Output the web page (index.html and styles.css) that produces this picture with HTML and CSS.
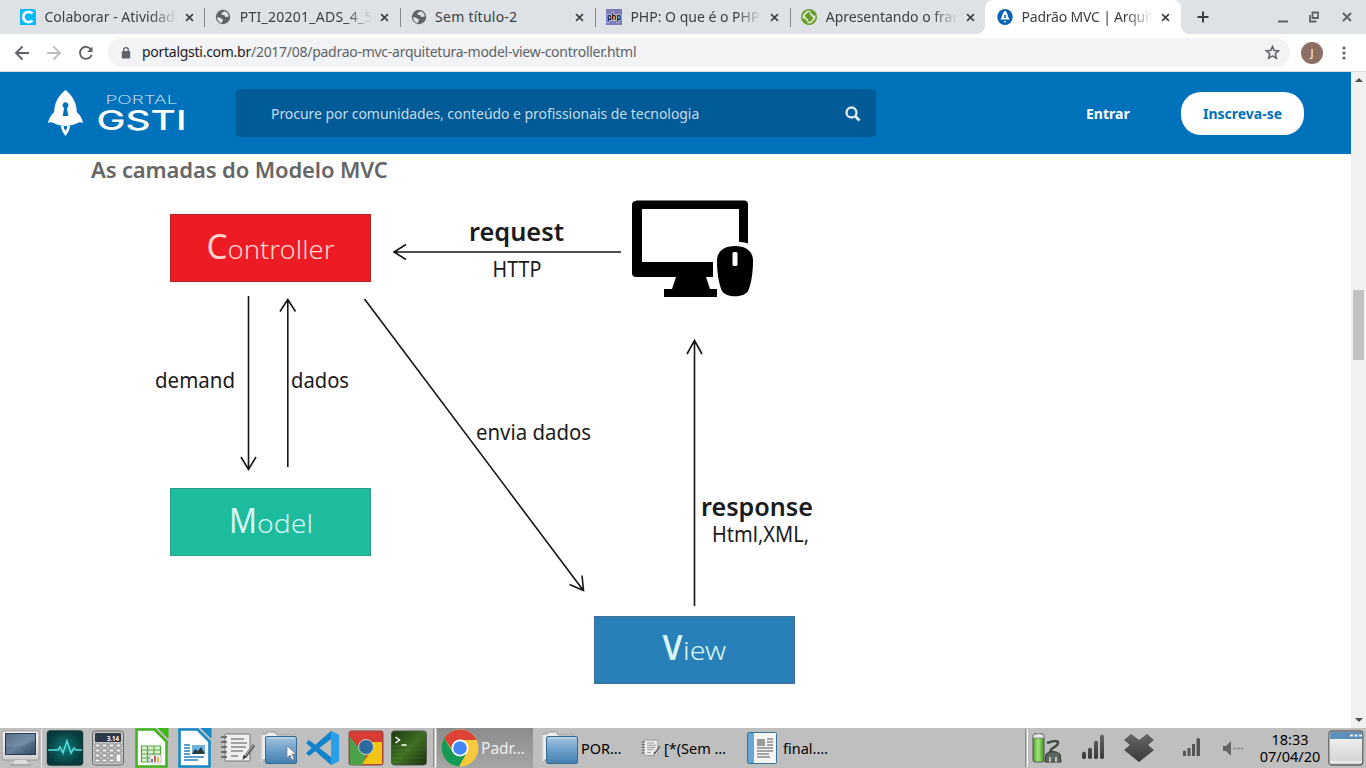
FILE: index.html
```html
<!DOCTYPE html>
<html lang="pt-BR">
<head>
<meta charset="utf-8">
<title>Padrão MVC | Arquitetura Model-View-Controller</title>
<link rel="stylesheet" href="styles.css">
</head>
<body>
<svg class="defs" width="0" height="0">
  <defs>
    <symbol id="globe" viewBox="0 0 16 16"><circle cx="8" cy="8" r="7.2" fill="#5f6368"/><path d="M2.2 8.2c1.500.1 2.700.3 3.600 1.100 1.100.9 2.200.5 2.200 1.800 0 .9-.9 1-.8 2.700C4 13.500 2 11 2.200 8.200zM9.300 2.300C8.500 3.200 7 3.400 6.500 4.400c-.5 1.100 1 1.600 2.200 1.500 1.200 0 .8 1.700 1.900 2 1.200.4 2-.5 3.200-.3-.1-2.600-2-4.800-4.500-5.300z" fill="#dee1e6"/></symbol>
    <symbol id="close" viewBox="0 0 10 10"><path d="M1.200 1.200l7.600 7.600M8.800 1.200L1.200 8.800" stroke="#3c4043" stroke-width="1.800"/></symbol>
    <linearGradient id="folderFill" x1="0" y1="0" x2="0" y2="1"><stop offset="0" stop-color="#a4c4de"/><stop offset=".5" stop-color="#6c9fca"/><stop offset="1" stop-color="#447eb0"/></linearGradient>
    <linearGradient id="grey" x1="0" y1="0" x2="0" y2="1"><stop offset="0" stop-color="#f8f8f8"/><stop offset="1" stop-color="#cfcfcf"/></linearGradient>
    <linearGradient id="dark" x1="0" y1="0" x2="0" y2="1"><stop offset="0" stop-color="#666"/><stop offset="1" stop-color="#3a3a3a"/></linearGradient>
    <linearGradient id="screen" x1="0" y1="0" x2="1" y2="1"><stop offset="0" stop-color="#3d5067"/><stop offset=".5" stop-color="#65809c"/><stop offset="1" stop-color="#344960"/></linearGradient>
    <radialGradient id="teal"><stop offset="0" stop-color="#13807f"/><stop offset="1" stop-color="#063b3c"/></radialGradient>
    <linearGradient id="term" x1="0" y1="0" x2="1" y2="1"><stop offset="0" stop-color="#1d3a0d"/><stop offset=".5" stop-color="#3d6f22"/><stop offset="1" stop-color="#162c09"/></linearGradient>
    <linearGradient id="battery"><stop offset="0" stop-color="#4d9b28"/><stop offset=".45" stop-color="#a5e77c"/><stop offset="1" stop-color="#439120"/></linearGradient>
    <symbol id="folder" viewBox="0 0 38 34"><path d="M2 3h4l2-2h7l2 3h15v25H2z" fill="#eee" stroke="#999"/><path d="M2 30V4" stroke="#fff"/><rect x="5.500" y="5.500" width="31" height="27" rx="1.500" fill="url(#folderFill)" stroke="#39698f"/><path d="M7 7h28" stroke="#c5dbed"/></symbol>
    <symbol id="notes" viewBox="0 0 36 32"><rect x="5" y="2" width="25" height="27" rx="1" fill="#eee" stroke="#777"/><g stroke="#555" stroke-width="1.500"><path d="M1 5h6M1 10h6M1 15h6M1 20h6M1 25h6"/></g><g stroke="#888" stroke-width="1.500"><path d="M11 7h13M11 11h16M11 15h15M11 19h12M11 24h7"/></g><path d="M34 13L25 25" stroke="#555" stroke-width="3"/><path d="M33.500 13L25 24" stroke="#aaa" stroke-width="1.200"/><path d="M23.500 23l3 2-4 3z" fill="#333"/></symbol>
  </defs>
</svg>
<div class="window">
  <header class="tabstrip">
    <div class="tab"><svg class="fav" viewBox="0 0 16 16"><path d="M0 0h14l2 2v14H0z" fill="#00b9ff"/><path d="M12.500 4.500C9 1.500 3.300 3 3.300 8s5.700 6.500 9.200 3.500" fill="none" stroke="#fff" stroke-width="2.700"/></svg><span class="title fade">Colaborar - Atividade</span><svg class="x"><use href="#close"/></svg></div>
    <div class="tab"><svg class="fav"><use href="#globe"/></svg><span class="title fade wide">PTI_20201_ADS_4_5</span><svg class="x"><use href="#close"/></svg></div>
    <div class="tab"><svg class="fav"><use href="#globe"/></svg><span class="title wide">Sem título-2</span><svg class="x"><use href="#close"/></svg></div>
    <div class="tab"><svg class="fav" viewBox="0 0 16 16"><rect width="16" height="16" fill="#7d7dbb"/><text x="1" y="11" class="php" textLength="14" lengthAdjust="spacingAndGlyphs">php</text></svg><span class="title fade">PHP: O que é o PHP?</span><svg class="x"><use href="#close"/></svg></div>
    <div class="tab last"><svg class="fav" viewBox="0 0 16 16"><circle cx="8" cy="8" r="8" fill="#679c2d"/><path d="M9.500 2.500H6.500L2.500 6.500v3M2.500 7l4.500 5M6.500 13.500h3l4-4v-3M13.500 9L9 4" fill="none" stroke="#e8f2dc" stroke-width="1.700"/></svg><span class="title fade">Apresentando o framework</span><svg class="x"><use href="#close"/></svg></div>
    <div class="tab active"><svg class="fav" viewBox="0 0 16 16"><ellipse cx="8" cy="8" rx="7.700" ry="8" fill="#0862b4"/><path d="M8 1.500C5.500 4 5 6.500 4.800 8L3.300 10.500h9.400L11.200 8C11 6.500 10.500 4 8 1.500zM6.800 12h2.400L8 14z" fill="#fff"/><path d="M7.200 6h1.600v3H7.200z" fill="#0862b4"/></svg><span class="title fade">Padrão MVC | Arquitetura</span><svg class="x"><use href="#close"/></svg></div>
    <svg class="newtab" viewBox="0 0 12 12"><path d="M6 .5v11M.5 6h11" stroke="#3c4043" stroke-width="2"/></svg>
    <svg class="winctl" viewBox="0 0 76 14"><path d="M1 11.500h10" stroke="#5f6368" stroke-width="2"/><path d="M35.500 2.500H41V8h-5.500zM33 5v6.500h6.500" fill="none" stroke="#5f6368" stroke-width="1.800"/><path d="M66 3l8 8M74 3l-8 8" stroke="#5f6368" stroke-width="2"/></svg>
  </header>
  <div class="toolbar">
    <svg class="nav" viewBox="0 0 108 36"><g fill="none" stroke-width="1.900"><path d="M29 18H16.500M22.500 11.500L16 18l6.500 6.500" stroke="#5f6368"/><path d="M47 18h12.500M53.500 11.500L60 18l-6.500 6.500" stroke="#bdbfc2"/><path d="M91 14.500a6 6 0 1 0 .7 5.200" stroke="#5f6368"/></g><path d="M92.500 11.500V17H87z" fill="#5f6368"/></svg>
    <div class="omnibox">
      <svg class="lock" viewBox="0 0 10 12"><rect x=".8" y="4" width="8.400" height="7.500" rx="1" fill="#5f6368"/><path d="M2.700 5V3a2.300 2.300 0 0 1 4.600 0v2" fill="none" stroke="#5f6368" stroke-width="1.300"/></svg>
      <span class="url"><b>portalgsti.com.br</b>/2017/08/padrao-mvc-arquitetura-model-view-controller.html</span>
      <svg class="star" viewBox="0 0 14 14"><path d="M7 1.300l1.600 3.900 4.200.3-3.200 2.700 1 4.200L7 10.200l-3.600 2.200 1-4.200L1.200 5.500l4.200-.3z" fill="none" stroke="#5f6368" stroke-width="1.400"/></svg>
    </div>
    <span class="avatar">J</span>
    <svg class="dots" viewBox="0 0 4 14"><g fill="#5f6368"><circle cx="2" cy="2" r="1.600"/><circle cx="2" cy="7" r="1.600"/><circle cx="2" cy="12" r="1.600"/></g></svg>
  </div>
  <div class="view">
    <main class="page">
      <div class="site">
        <svg class="logo" viewBox="0 0 140 48"><g fill="#fff"><path d="M17.500 1C10 7 6 15 6.300 23 3 26 1 29 0 34c2-1 4-1 6 .3 8 3.500 15 3.500 23 0 2-1.300 4-1.300 6-.3-1-5-3-8-6.300-11C29 15 25 7 17.500 1z"/><path d="M13 36.500c3 1 6 1 9 0 0 4-2 7-4.500 10.500C15 43.500 13 40.500 13 36.500z"/></g><path d="M14.700 27l1.400-8a3 3 0 1 1 2.800 0l1.400 8zM15.800 37h3.400c.2 2-.7 3.500-1.700 4.500-1-1-1.900-2.500-1.700-4.500z" fill="#0072bc"/><text x="57.500" y="15" class="portal" textLength="72" lengthAdjust="spacingAndGlyphs">PORTAL</text><text x="48.500" y="41" class="gsti" textLength="90" lengthAdjust="spacingAndGlyphs">GSTI</text></svg>
        <div class="search"><span class="ph">Procure por comunidades, conteúdo e profissionais de tecnologia</span><svg class="mag" viewBox="0 0 16 16"><circle cx="6.500" cy="6.500" r="5" fill="none" stroke="#e4eef5" stroke-width="2.300"/><path d="M10.300 10.300l4.200 4.200" stroke="#e4eef5" stroke-width="2.700"/></svg></div>
        <span class="login">Entrar</span>
        <span class="signup">Inscreva-se</span>
      </div>
      <h2 class="heading">As camadas do Modelo MVC</h2>
      <svg class="diagram" viewBox="90 186 800 514">
        <g class="boxes"><rect x="170.500" y="214.500" width="200" height="67" fill="#ed1c24" stroke="#b52428"/><rect x="170.500" y="488.500" width="200" height="67" fill="#1dbc9c" stroke="#2b9f88"/><rect x="594.500" y="616.500" width="200" height="67" fill="#2980b9" stroke="#406f91"/></g>
        <g class="arrows"><path d="M621 252H394M406 244.500L394 252l12 7.500M248.500 296V468M241 457l7.500 12.500L256 457M287.800 467V301M280 311.500l7.800-12 7.700 12M364.500 299L583 590M569.500 584.500l14 6-1.500-15M694.500 606V341M687 354l7.500-13.500L702 354"/></g>
        <g class="device"><path d="M636 200.500h108q4 0 4 4v39q-4-2-9-1.500V209h-97v53h71v15h-7l4 12h7v8h-53v-8h8l4-12h-40q-4 0-4-4v-68q0-4 4-4z"/><path d="M735 246c12 0 18 6 18 15 0 15-3 26-5 30-4 7-22 7-26 0-2-4-5-15-5-30 0-9 6-15 18-15z"/><rect x="732.500" y="252" width="5" height="14" rx="1.500" fill="#fff"/></g>
        <g class="boxtext"><text x="206.500" y="259" textLength="21" lengthAdjust="spacingAndGlyphs" class="big soft">C</text><text x="227.500" y="259" textLength="107" lengthAdjust="spacingAndGlyphs" class="rest soft">ontroller</text><text x="229" y="532.500" textLength="28" lengthAdjust="spacingAndGlyphs" class="big">M</text><text x="257" y="532.500" textLength="56" lengthAdjust="spacingAndGlyphs" class="rest">odel</text><text x="662.500" y="660" textLength="20" lengthAdjust="spacingAndGlyphs" class="big semi">V</text><text x="683" y="660" textLength="43" lengthAdjust="spacingAndGlyphs" class="rest">iew</text></g>
        <g class="labels"><text x="155" y="387.500" textLength="80" lengthAdjust="spacingAndGlyphs">demand</text><text x="291" y="387.500" textLength="58" lengthAdjust="spacingAndGlyphs">dados</text><text x="476" y="439.500" textLength="115" lengthAdjust="spacingAndGlyphs">envia dados</text><text x="492.500" y="276.500" textLength="49" lengthAdjust="spacingAndGlyphs">HTTP</text><text x="712" y="542" textLength="97" lengthAdjust="spacingAndGlyphs">Html,XML,</text><text x="469" y="240.500" textLength="95" lengthAdjust="spacingAndGlyphs" class="strong">request</text><text x="701" y="515.500" textLength="112" lengthAdjust="spacingAndGlyphs" class="strong">response</text></g>
      </svg>
    </main>
    <aside class="scrollbar"><i class="up"></i><i class="thumb"></i><i class="down"></i></aside>
  </div>
  <footer class="taskbar">
    <div class="launch">
      <svg class="ico desk" viewBox="0 0 42 40"><rect x="2" y="3" width="37" height="29" rx="2" fill="url(#grey)" stroke="#999"/><rect x="5.500" y="5.500" width="30" height="21" fill="url(#screen)" stroke="#273a50"/><path d="M6 19Q24 20 35 12V6H6z" fill="#91a6bb" opacity=".35"/><path d="M15 32h11l2 4H13z" fill="#ddd"/><path d="M10 36h21v2H10z" fill="#aaa"/><path d="M41.500 1v39" stroke="#eee"/></svg>
      <svg class="ico" viewBox="0 0 40 40"><rect x="2.500" y="3" width="35" height="34" rx="3" fill="url(#teal)" stroke="#17393a" stroke-width="1.500"/><path d="M4 9h32M4 13h32M4 17h32M4 25h32M4 29h32M4 33h32" stroke="#0b4c4c" opacity=".5"/><path d="M3 22h10l2-3 3 6 4-12 4 12 3-5 2 2h6" fill="none" stroke="#54dedb" stroke-width="1.600"/></svg>
      <svg class="ico" viewBox="0 0 40 40"><rect x="4.500" y="3" width="31" height="34" rx="3" fill="#c4c4c4" stroke="#666"/><rect x="7" y="5" width="26" height="9" rx="1" fill="#2d3947"/><text x="19" y="12.500" class="calc" textLength="12" lengthAdjust="spacingAndGlyphs">3.14</text><g fill="#f6f6f6" stroke="#777" stroke-width=".8"><path d="M7 16h5v3H7zM14 16h5v3h-5zM21 16h5v3h-5zM28 16h5v3h-5zM7 21h5v3H7zM14 21h5v3h-5zM21 21h5v3h-5zM28 21h5v3h-5zM7 26h5v3H7zM14 26h5v3h-5zM21 26h5v3h-5zM7 31h5v3H7zM14 31h5v3h-5zM21 31h5v3h-5zM28 26h5v8h-5z"/></g></svg>
      <svg class="ico" viewBox="0 0 40 40"><path d="M5.500 1.500h18l12 12v25h-30z" fill="#fff" stroke="#43b51f" stroke-width="2.600"/><path d="M27 0h10v10zM23 0l14 14" fill="#43b51f" stroke="#43b51f"/><path d="M10.500 18h19v16h-19zM10.500 22h19M10.500 26h19M10.500 30h19M16.500 18v16M23 18v16" fill="#dff0d8" stroke="#54a93b" stroke-width="1.200"/><rect x="19" y="27" width="11" height="8" fill="#fff" stroke="#aaa" stroke-width=".7"/><path d="M20 31h2v3h-2z" fill="#4285c7"/><path d="M23 28h2v6h-2z" fill="#db5840"/><path d="M26 29h2v5h-2z" fill="#edb332"/></svg>
      <svg class="ico" viewBox="0 0 40 40"><path d="M5.500 1.500h18l12 12v25h-30z" fill="#fff" stroke="#178ac8" stroke-width="2.600"/><path d="M27 0h10v10zM23 0l14 14" fill="#178ac8" stroke="#178ac8"/><path d="M10 17h6M10 20h6M10 23h6M10 26h6M10 29h20M10 32h14" stroke="#277fb7" stroke-width="1.500"/><rect x="18" y="17" width="13" height="9" fill="#6db4df"/><path d="M18 26l3-5 3 2 3-4 4 7z" fill="#283d40"/></svg>
      <svg class="ico" viewBox="-3 -4 40 40"><use href="#notes" width="36" height="32"/></svg>
      <svg class="ico" viewBox="0 -3 40 40"><use href="#folder" width="38" height="34"/><path d="M27 15v12l3-3 2 5 2-1-2-5h4z" fill="#fff" stroke="#777" stroke-width=".7"/></svg>
      <svg class="ico" viewBox="0 0 40 40"><path d="M28 3l8 4v26l-8 4L3 15l3-3 22 17V11L6 28l-3-3z" fill="#1182cc"/><path d="M28 3l8 4v26l-8 4z" fill="#29a0e8"/></svg>
      <svg class="ico" viewBox="0 0 40 40"><rect x="3" y="3" width="34" height="34" rx="2" fill="#d83b31" stroke="#8e4b42"/><path d="M4 9l11 14 6 3-5 11H4z" fill="#4ba248"/><path d="M20 14h16v22H16l9-13z" fill="#f1c614"/><circle cx="20" cy="19" r="7.500" fill="#2e699f" stroke="#ccd4cc" stroke-width="1"/></svg>
      <svg class="ico" viewBox="0 0 40 40"><rect x="2.500" y="3" width="35" height="34" rx="3" fill="url(#term)" stroke="#555"/><path d="M3 18h34M3 22h34M3 26h34M3 30h34M3 34h34" stroke="#6f9c4c" opacity=".25"/><path d="M6.500 9l4 3-4 3M12.500 17h5" fill="none" stroke="#fff" stroke-width="1.500"/></svg>
    </div>
    <i class="divider"></i>
    <div class="task current"><svg class="chrome" viewBox="0 0 38 38"><circle cx="19" cy="19" r="18.500" fill="#fbc93c"/><path d="M3.300 9.300A18.500 18.500 0 0 1 35.500 11H20l-8.500 10z" fill="#de4237"/><path d="M3.300 9.300l8.600 14 13 2L18 37.500A18.500 18.500 0 0 1 3.300 9.300z" fill="#149a55"/><circle cx="19" cy="19" r="8.500" fill="#fff"/><circle cx="19" cy="19" r="6.800" fill="#4285f4"/></svg><span>Padr…</span></div>
    <div class="task t-folder"><svg class="fold"><use href="#folder"/></svg><span>POR…</span></div>
    <div class="task t-notes"><svg class="note"><use href="#notes"/></svg><span>[*(Sem …</span></div>
    <div class="task t-doc"><svg class="doc" viewBox="0 0 30 33"><rect x=".5" y=".5" width="29" height="31" rx="1" fill="#f5f5f5" stroke="#347399"/><path d="M1 1h6v30H1z" fill="#69a4d3"/><rect x="10" y="7" width="8" height="7" fill="#999"/><path d="M20 7h6M20 10h6M20 13h6M10 16h16M10 19h16M10 22h12M10 25h13" stroke="#888" stroke-width="1.300"/></svg><span>final.…</span></div>
    <div class="tray">
      <i class="divider"></i>
      <svg class="trayicons" viewBox="1028 728 220 40"><rect x="1033" y="734" width="11" height="28" rx="2" fill="url(#battery)" stroke="#555"/><path d="M1033 735q5.500-3 11 0v3h-11z" fill="#e8e8e8" stroke="#777" stroke-width=".7"/><path d="M1047 743q11-4 11 0 0 2-5 5-3 2-3 5" fill="none" stroke="#444d44" stroke-width="2.600"/><path d="M1046 754q7-5 14 0l1 8h-16z" fill="#5c665c" stroke="#303530"/><path d="M1050 757v5M1056 757v5" stroke="#ddd" stroke-width="1.500"/>
      <path fill="url(#dark)" d="M1082 753q2-3 4 0v5q-2 2-4 0zM1088 749q2-3 4 0v9q-2 2-4 0zM1094 742q2-3 4 0v16q-2 2-4 0zM1100 736q2-3 4 0v22q-2 2-4 0z"/><path fill="#555" d="M1183 751q1.500-1 3 0v5h-3zM1187.500 748h3v8h-3zM1192 744h3v12h-3zM1196.500 739q1.500-2 3.500 0v17h-3.500z"/>
      <path d="M1131 734l8 6 8-6 7 6-6 5 6 5-15 12-15-12 6-5-6-5z" fill="url(#dark)"/><path d="M1223 746h3l5-5v15l-5-5h-3z" fill="#666"/><path d="M1233 748.500h3M1237 748.500h3M1241 748.500h2" stroke="#858585" stroke-width="1.500"/></svg>
      <div class="clock"><span>18:33</span><span>07/04/20</span></div>
      <svg class="showdesk" viewBox="0 0 36 38"><rect x=".8" y="2" width="34" height="34" rx="3" fill="url(#grey)" stroke="#666" stroke-width="1.300"/><path d="M2 4q0-1 2-1h28q2 0 2 1v6H2z" fill="#5c91bd"/><path d="M22 6.500h3M26.500 6.500h3M31 6.500h3" stroke="#eee" stroke-width="1.800"/><path d="M2 33h32" stroke="#fff"/></svg>
    </div>
  </footer>
</div>
</body>
</html>
```

FILE: styles.css
```css
* { box-sizing: border-box; }
body { margin: 0; font-family: "Noto Sans", "Open Sans", sans-serif; overflow: hidden; }
svg { display: block; flex: none; }
.defs { position: absolute; }
.window { width: 1366px; height: 768px; display: flex; flex-direction: column; background: #fff; }
.tabstrip { height: 34px; flex: none; display: flex; align-items: center; background: #dee1e6; padding-left: 10px; }
.tab { width: 195.300px; height: 34px; flex: none; display: flex; align-items: center; padding-left: 10px; position: relative; }
.tab::after { content: ""; position: absolute; right: 0; top: 8px; width: 1px; height: 19px; background: #85888c; }
.tab.last { width: 193.800px; }
.tab.last::after { display: none; }
.tab.active { width: 196px; background: #fff; border-radius: 8px 8px 0 0; padding-left: 12px; margin-right: 16px; }
.tab.active::before, .tab.active::after { content: ""; position: absolute; top: auto; bottom: 0; width: 8px; height: 8px; }
.tab.active::before { left: -8px; background: radial-gradient(circle at 0 0, transparent 7.500px, #fff 8px); }
.tab.active::after { right: -8px; background: radial-gradient(circle at 100% 0, transparent 7.500px, #fff 8px); }
.fav { width: 16px; height: 16px; margin-right: 8.500px; }
.title { width: 132px; font-size: 14px; line-height: 20px; color: #3c4043; white-space: nowrap; overflow: hidden; }
.wide { letter-spacing: 0.250px; }
.active .title { letter-spacing: -0.200px; }
.fade { -webkit-mask-image: linear-gradient(90deg, #000 80%, transparent 100%); mask-image: linear-gradient(90deg, #000 80%, transparent 100%); }
.x { width: 9px; height: 9px; margin-left: 8px; }
.newtab { width: 12px; height: 12px; }
.winctl { width: 76px; height: 14px; margin-left: auto; margin-right: 13px; }
.php { font: bold 8px "Noto Sans", sans-serif; fill: #000; stroke: #fff; stroke-width: 1px; paint-order: stroke; }
.calc { font: bold 7px "Noto Sans", sans-serif; fill: #fff; }
.toolbar { height: 38px; flex: none; display: flex; align-items: center; border-bottom: 1px solid #d8dadc; padding-right: 20px; }
.nav { width: 108px; height: 36px; }
.omnibox { width: 1182px; height: 29px; border-radius: 15px; background: #f1f3f4; display: flex; align-items: center; padding-left: 13px; padding-right: 10px; }
.lock { width: 10px; height: 12px; margin-right: 11px; }
.url { font-size: 14px; line-height: 20px; height: 22px; letter-spacing: -0.270px; color: #5f6368; white-space: nowrap; }
.url b { font-weight: 400; color: #202124; }
.star { width: 15px; height: 15px; margin-left: auto; }
.avatar { width: 22px; height: 22px; border-radius: 50%; background: #8d6e63; color: #fff; font-size: 11px; line-height: 22px; text-align: center; margin-left: 11px; }
.dots { width: 4px; height: 14px; margin-left: auto; }
.view { height: 656px; flex: none; display: flex; }
.page { width: 1351px; overflow: hidden; background: #fff; }
.site { height: 82px; display: flex; align-items: center; background: #0072bc; padding-left: 48px; padding-right: 47px; }
.logo { width: 140px; height: 48px; margin-right: 48px; }
.portal { font: 200 12px Inter, sans-serif; fill: #e2f0fa; }
.gsti { font: 500 27.500px Inter, sans-serif; fill: #fff; }
.search { width: 640px; height: 48px; border-radius: 4px; background: #005b96; display: flex; align-items: center; justify-content: space-between; padding: 0 15px 0 35px; }
.ph { font-size: 14px; letter-spacing: -0.050px; color: #c7dbe9; white-space: nowrap; }
.mag { width: 16px; height: 16px; position: relative; top: 1px; }
.login { margin-left: 210px; color: #fff; font-weight: 700; font-size: 14px; }
.signup { margin-left: auto; width: 123px; height: 43px; border-radius: 20px; background: #fff; color: #0072bc; font-size: 14px; line-height: 43px; font-weight: 700; text-align: center; }
.heading { margin: 0; padding-left: 91px; height: 32px; font: 600 22px/31px "Noto Sans", sans-serif; letter-spacing: -0.130px; color: #666; }
.diagram { width: 800px; height: 514px; margin-left: 90px; }
.arrows { fill: none; stroke: #151515; stroke-width: 1.600px; }
.device { fill: #000; }
.labels { font: 21px "Noto Sans", sans-serif; fill: #1b1b1b; }
.strong { font-size: 26px; font-weight: 600; }
.boxtext { fill: #d8f4f5; }
.big { font-size: 34px; }
.semi { font-weight: 600; }
.rest { font-size: 26px; font-weight: 350; }
.soft { fill: #ffd4ce; }
.scrollbar { width: 15px; background: #f1f1f1; display: flex; flex-direction: column; align-items: center; }
.up, .down { width: 0; height: 0; border: 4px solid transparent; }
.up { margin-top: 2px; border-bottom-color: #505050; }
.thumb { width: 11px; height: 70px; margin-top: 208px; background: #c1c1c1; }
.down { margin-top: auto; margin-bottom: 2px; border-top-color: #505050; }
.taskbar { height: 40px; flex: none; background: #bfbfbf; display: flex; align-items: center; color: #000; font-size: 14.500px; }
.launch { display: flex; align-items: center; width: 433px; }
.ico { width: 40px; height: 40px; margin-right: 3px; }
.desk { width: 42px; }
.divider { width: 3px; height: 38px; border-left: 1px solid #8d8d8d; border-right: 1px solid #fff; }
.task { height: 40px; display: flex; align-items: center; white-space: nowrap; }
.current { width: 96px; margin-left: 1px; background: linear-gradient(#8c8c8c, #a5a5a5); color: #eee; padding-left: 4px; gap: 2px; font-size: 15.500px; }
.chrome { width: 38px; height: 38px; }
.t-folder { width: 101px; padding-left: 8px; gap: 2px; }
.fold { width: 38px; height: 34px; }
.t-notes { width: 106px; padding-left: 7px; gap: 3px; }
.note { width: 20px; height: 22px; }
.t-doc { width: 110px; padding-left: 7px; gap: 6px; }
.doc { width: 30px; height: 33px; }
.tray { margin-left: auto; display: flex; align-items: center; }
.trayicons { width: 220px; height: 40px; }
.clock { width: 80px; display: flex; flex-direction: column; text-align: center; line-height: 17px; padding-left: 4px; }
.showdesk { width: 36px; height: 38px; margin-right: 2px; }
```
